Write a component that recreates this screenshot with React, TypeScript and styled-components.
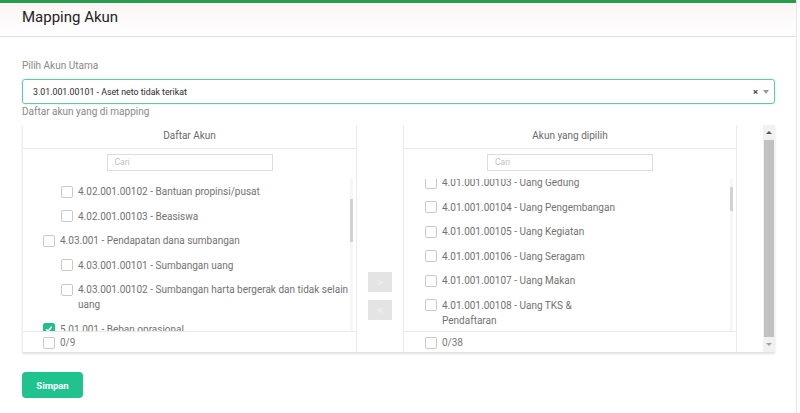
import * as React from 'react';
import styled, { createGlobalStyle } from 'styled-components';

const GlobalStyle = createGlobalStyle`
    body {
        margin: 0;
        background: #ffffff;
        font-family: Roboto, 'Liberation Sans', sans-serif;
    }
`;

const Page = styled('div')`
    width: 796px;
    min-height: 413px;
    border-right: 1px solid #e6e6e6;
    box-sizing: content-box;
`;

const TopBar = styled('div')`
    height: 3px;
    background: #249c4c;
`;

const Header = styled('div')`
    height: 34px;
    box-sizing: border-box;
    padding: 5px 22px 0;
    background: linear-gradient(#fbf5f5, #ffffff);
    border-bottom: 1px solid #e2e2e2;
    font-size: 15px;
    line-height: 18px;
    color: #222;
`;

const Content = styled('div')`
    padding: 22px 21px 0 22px;
`;

const Label = styled('div')<{ $gap?: number }>`
    font-size: 10px;
    line-height: 14px;
    color: #888888;
    margin-top: ${(p) => p.$gap || 0}px;
`;

const Select = styled('div')`
    margin-top: 6px;
    height: 25px;
    box-sizing: border-box;
    display: flex;
    align-items: center;
    padding: 0 5px 0 10px;
    border: 1px solid #66c9a6;
    border-radius: 3px;
    box-shadow: 0 0 2px rgba(40, 180, 130, 0.35);
    font-size: 8.8px;
    color: #2a2a2a;
`;

const SelectValue = styled('span')`
    flex: 1;
`;

const Clear = styled('span')`
    font-size: 9.5px;
    font-weight: 700;
    color: #444;
    margin-right: 5px;
`;

const Caret = styled('span')`
    width: 0;
    height: 0;
    border-left: 3px solid transparent;
    border-right: 3px solid transparent;
    border-top: 4px solid #999;
`;

const Transfer = styled('div')`
    margin-top: 6px;
    height: 227px;
    display: flex;
    border-left: 1px solid #eeeeee;
    box-shadow: 0 2px 2px rgba(0, 0, 0, 0.12);
`;

const Panel = styled('div')<{ $width: number }>`
    width: ${(p) => p.$width}px;
    display: flex;
    flex-direction: column;
    border-left: 1px solid #ebebeb;
    border-right: 1px solid #ebebeb;
    &:first-child {
        border-left: none;
    }
`;

const PanelHead = styled('div')`
    height: 24px;
    box-sizing: border-box;
    border-bottom: 1px solid #e8e8e8;
    text-align: center;
    font-size: 10px;
    line-height: 21px;
    color: #6a6a6a;
`;

const Search = styled('div')`
    width: 166px;
    height: 17px;
    box-sizing: border-box;
    margin: 5px auto 8px;
    border: 1px solid #dddddd;
    font-size: 8.5px;
    line-height: 15px;
    padding-left: 7px;
    color: #c2c2c2;
`;

const ListArea = styled('div')`
    flex: 1;
    display: flex;
    overflow: hidden;
`;

const List = styled('div')<{ $shift: number }>`
    flex: 1;
    margin-top: ${(p) => -p.$shift}px;
`;

const Row = styled('div')<{ $indent: number }>`
    display: flex;
    align-items: flex-start;
    padding: 5px 0 4.5px ${(p) => p.$indent}px;
    font-size: 10px;
    line-height: 15px;
    color: #727272;
    white-space: pre;
`;

const Box = styled('span')<{ $checked?: boolean }>`
    flex: none;
    width: 12px;
    height: 12px;
    box-sizing: border-box;
    margin: 1.5px 5px 0 0;
    border-radius: 2px;
    border: 1px solid ${(p) => (p.$checked ? '#22bf8a' : '#c8c8c8')};
    background: ${(p) => (p.$checked ? '#22bf8a' : '#fff')};
    display: flex;
    align-items: center;
    justify-content: center;
`;

const Track = styled('div')`
    width: 3px;
    margin-right: 3px;
    background: #f6f6f6;
    display: flex;
    flex-direction: column;
`;

const Thumb = styled('div')<{ $top: number; $height: number }>`
    margin-top: ${(p) => p.$top}px;
    height: ${(p) => p.$height}px;
    background: #d2d2d2;
`;

const Footer = styled('div')<{ $indent: number }>`
    height: 21px;
    box-sizing: border-box;
    border-top: 1px solid #e8e8e8;
    display: flex;
    align-items: center;
    padding-left: ${(p) => p.$indent}px;
    font-size: 10px;
    color: #7a7a7a;
`;

const Middle = styled('div')`
    width: 46px;
    display: flex;
    flex-direction: column;
    align-items: center;
    padding-top: 147px;
    gap: 8px;
`;

const MoveButton = styled('div')`
    width: 24px;
    height: 20px;
    background: #e4e4e4;
    color: #f4f4f4;
    font-size: 10px;
    display: flex;
    align-items: center;
    justify-content: center;
`;

const Spacer = styled('div')`
    flex: 1;
`;

const OuterScroll = styled('div')`
    width: 12px;
    display: flex;
    flex-direction: column;
    background: #f1f1f1;
`;

const ScrollArrow = styled('div')<{ $up?: boolean }>`
    height: 15px;
    display: flex;
    align-items: center;
    justify-content: center;
    &::after {
        content: '';
        border-left: 3px solid transparent;
        border-right: 3px solid transparent;
        ${(p) =>
            p.$up
                ? 'border-bottom: 3px solid #555;'
                : 'border-top: 3px solid #a0a0a0;'}
    }
`;

const ScrollThumb = styled('div')`
    flex: 1;
    background: #c1c1c1;
    margin: 0 1px;
`;

const SaveButton = styled('button')`
    margin-top: 20px;
    width: 61px;
    height: 26px;
    border: none;
    border-radius: 4px;
    background: #20c38e;
    color: #fff;
    font-family: Roboto, 'Liberation Sans', sans-serif;
    font-size: 9.5px;
    font-weight: 700;
    padding: 0;
`;

interface IItem {
    label: string;
    level: number;
    checked?: boolean;
}

const leftItems: IItem[] = [
    { label: '4.02.001.00102 - Bantuan propinsi/pusat', level: 1 },
    { label: '4.02.001.00103 - Beasiswa', level: 1 },
    { label: '4.03.001 - Pendapatan dana sumbangan', level: 0 },
    { label: '4.03.001.00101 - Sumbangan uang', level: 1 },
    {
        label: '4.03.001.00102 - Sumbangan harta bergerak dan tidak selain\nuang',
        level: 1,
    },
    { label: '5.01.001 - Beban oprasional', level: 0, checked: true },
];

const rightItems: IItem[] = [
    { label: '4.01.001.00103 - Uang Gedung', level: 0 },
    { label: '4.01.001.00104 - Uang Pengembangan', level: 0 },
    { label: '4.01.001.00105 - Uang Kegiatan', level: 0 },
    { label: '4.01.001.00106 - Uang Seragam', level: 0 },
    { label: '4.01.001.00107 - Uang Makan', level: 0 },
    { label: '4.01.001.00108 - Uang TKS &\nPendaftaran', level: 0 },
];

const Check = () => (
    <svg width="8" height="8" viewBox="0 0 8 8">
        <path d="M1.2 4.2 L3.2 6 L6.8 1.8" fill="none" stroke="#fff" strokeWidth="1.5" />
    </svg>
);

interface IPanelProps {
    title: string;
    width: number;
    indent: number;
    items: IItem[];
    shift: number;
    thumbTop: number;
    thumbHeight: number;
    count: string;
}

const TransferPanel: React.FunctionComponent<IPanelProps> = ({
    title,
    width,
    indent,
    items,
    shift,
    thumbTop,
    thumbHeight,
    count,
}) => (
    <Panel $width={width}>
        <PanelHead>{title}</PanelHead>
        <Search>Cari</Search>
        <ListArea>
            <List $shift={shift}>
                {items.map((item, index) => (
                    <Row $indent={indent + item.level * 18} key={index}>
                        <Box $checked={item.checked}>{item.checked && <Check />}</Box>
                        <span>{item.label}</span>
                    </Row>
                ))}
            </List>
            <Track>
                <Thumb $top={thumbTop} $height={thumbHeight} />
            </Track>
        </ListArea>
        <Footer $indent={indent}>
            <Box />
            <span>{count}</span>
        </Footer>
    </Panel>
);

const App = () => {
    return (
        <Page>
            <GlobalStyle />
            <TopBar />
            <Header>Mapping Akun</Header>
            <Content>
                <Label>Pilih Akun Utama</Label>
                <Select>
                    <SelectValue>3.01.001.00101 - Aset neto tidak terikat</SelectValue>
                    <Clear>×</Clear>
                    <Caret />
                </Select>
                <Label $gap={1}>Daftar akun yang di mapping</Label>
                <Transfer>
                    <TransferPanel
                        title="Daftar Akun"
                        width={333}
                        indent={20}
                        items={leftItems}
                        shift={0}
                        thumbTop={20}
                        thumbHeight={43}
                        count="0/9"
                    />
                    <Middle>
                        <MoveButton>&gt;</MoveButton>
                        <MoveButton>&lt;</MoveButton>
                    </Middle>
                    <TransferPanel
                        title="Akun yang dipilih"
                        width={332}
                        indent={21}
                        items={rightItems}
                        shift={9}
                        thumbTop={8}
                        thumbHeight={24}
                        count="0/38"
                    />
                    <Spacer />
                    <OuterScroll>
                        <ScrollArrow $up />
                        <ScrollThumb />
                        <ScrollArrow />
                    </OuterScroll>
                </Transfer>
                <SaveButton>Simpan</SaveButton>
            </Content>
        </Page>
    );
};

export default App;
